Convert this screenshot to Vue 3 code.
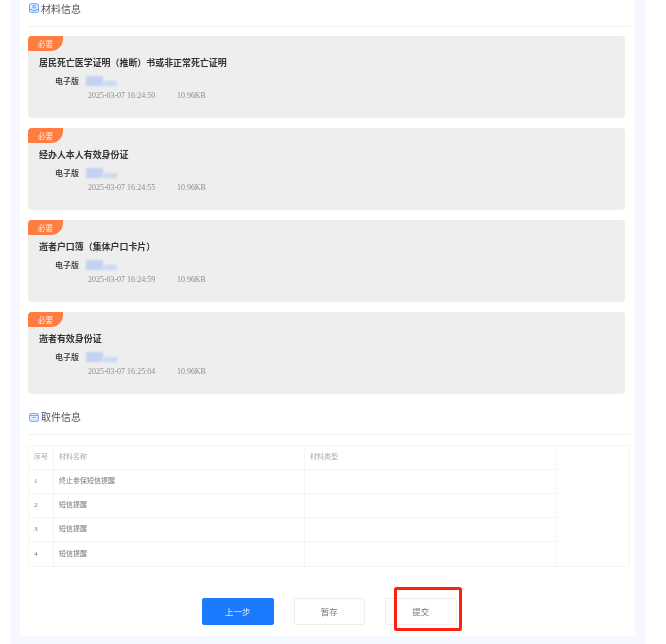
<script setup>
const materials = [
  { title: '居民死亡医学证明（推断）书或非正常死亡证明', time: '2025-03-07 16:24:50' },
  { title: '经办人本人有效身份证', time: '2025-03-07 16:24:55' },
  { title: '逝者户口簿（集体户口卡片）', time: '2025-03-07 16:24:59' },
  { title: '逝者有效身份证', time: '2025-03-07 16:25:04' }
]
const rows = ['终止参保短信提醒', '短信提醒', '短信提醒', '短信提醒']
</script>

<template>
  <div class="page">
    <main class="panel">
      <h2 class="heading first">
        <svg class="icon" viewBox="0 0 12 12" width="10" height="10">
          <rect x="0.6" y="0.8" width="10.8" height="10.4" rx="1.6" fill="#dcebff" stroke="#5b9dfa" stroke-width="1" />
          <circle cx="6" cy="4.4" r="1.7" fill="none" stroke="#4a90f5" stroke-width="1" />
          <path d="M1 8h2.6l1 1.2h2.8l1-1.2H11" fill="none" stroke="#4a90f5" stroke-width="1" />
        </svg>
        <span>材料信息</span>
      </h2>
      <section class="cards">
        <article v-for="m in materials" :key="m.time" class="card">
          <span class="tag">必要</span>
          <h3 class="card-title">{{ m.title }}</h3>
          <div class="file-row">
            <span class="file-label">电子版</span>
            <span class="file-name"><i class="b1"></i><i class="b2"></i></span>
          </div>
          <div class="meta">
            <span class="time">{{ m.time }}</span>
            <span>10.96KB</span>
          </div>
        </article>
      </section>

      <h2 class="heading second">
        <svg class="icon" viewBox="0 0 12 12" width="10" height="10">
          <rect x="0.7" y="1.8" width="10.6" height="9.4" rx="1.5" fill="#dcebff" stroke="#5b9dfa" stroke-width="1" />
          <path d="M1 4.2h10" stroke="#5b9dfa" stroke-width="1" />
          <path d="M4.4 6.6h3.2" stroke="#4a90f5" stroke-width="1" />
        </svg>
        <span>取件信息</span>
      </h2>
      <section class="table">
        <div class="row head">
          <div class="c no">序号</div>
          <div class="c name">材料名称</div>
          <div class="c type">材料类型</div>
        </div>
        <div v-for="(r, i) in rows" :key="i" class="row">
          <div class="c no">{{ i + 1 }}</div>
          <div class="c name">{{ r }}</div>
          <div class="c type"></div>
        </div>
      </section>

      <footer class="actions">
        <button class="btn primary">上一步</button>
        <button class="btn">暂存</button>
        <button class="btn submit">提交<span class="highlight"></span></button>
      </footer>
    </main>
  </div>
</template>

<style>
html, body { margin: 0; background: #fff; overflow: hidden; }
</style>

<style scoped>
.page {
  width: 635px;
  height: 644px;
  margin-left: 10px;
  padding: 0 10px 8px;
  box-sizing: border-box;
  background: #f5f9ff;
  font-family: "Liberation Serif", "Noto Sans CJK SC", serif;
  filter: blur(0.4px);
}
.panel {
  height: 636px;
  background: #fff;
  padding: 0 5px 0 8px;
  box-sizing: border-box;
  overflow: hidden;
}
.heading {
  display: flex;
  align-items: center;
  gap: 2px;
  margin: 0;
  padding-left: 1px;
  font-size: 10px;
  font-weight: 400;
  color: #555;
  font-family: "Noto Sans CJK SC", sans-serif;
  border-bottom: 1px solid #f0f0f0;
}
.first { height: 16px; padding-bottom: 10px; }
.second { height: 17px; margin-top: 14px; padding-bottom: 9px; }
.icon { flex: none; }
.cards {
  display: flex;
  flex-direction: column;
  gap: 10px;
  margin-top: 9px;
  margin-right: 5px;
}
.card {
  position: relative;
  height: 82px;
  background: #eeeeee;
  border-radius: 4px;
  padding: 20px 0 0 11px;
  box-sizing: border-box;
}
.tag {
  position: absolute;
  left: 0;
  top: 0;
  width: 35px;
  height: 15px;
  background: #ff7d41;
  border-radius: 4px 0 12px 0;
  color: #ffe9dd;
  font: 7.5px/15px "Noto Sans CJK SC", sans-serif;
  padding-left: 10px;
  box-sizing: border-box;
}
.card-title {
  margin: 0;
  font: 700 8.95px/14px "Noto Sans CJK SC", sans-serif;
  color: #333;
}
.file-row {
  display: flex;
  align-items: center;
  margin: 4px 0 0 16px;
  height: 14px;
}
.file-label {
  font: 500 8px/14px "Noto Sans CJK SC", sans-serif;
  color: #333;
  width: 31px;
}
.file-name {
  display: flex;
  align-items: flex-end;
  height: 10px;
  filter: blur(1.2px);
}
.b1 { width: 17px; height: 10px; background: #c3d1f2; }
.b2 { width: 13px; height: 5px; background: #c9daf2; margin-left: 1px; }
.meta {
  margin: 1px 0 0 49px;
  display: flex;
  font-size: 7.95px;
  line-height: 14px;
  color: #8b8b8b;
}
.time { width: 89px; }
.table {
  margin-top: 10px;
  border: 1px solid #f5f5f5;
  height: 122px;
  box-sizing: border-box;
  font-size: 7px;
}
.row {
  display: flex;
  height: 24px;
  width: 528px;
  border-bottom: 1px solid #f3f3f3;
  box-sizing: border-box;
}
.row:last-child { border-bottom: 0; }
.c {
  display: flex;
  align-items: center;
  box-sizing: border-box;
  padding-left: 5px;
  border-right: 1px solid #f5f5f5;
  color: #777;
  line-height: 1;
}
.head .c { color: #aaa; }
.no { width: 25px; }
.name { width: 251px; }
.type { width: 252px; }
.actions {
  display: flex;
  gap: 20px;
  margin: 31px 0 0 174px;
}
.btn {
  position: relative;
  width: 71.5px;
  height: 27px;
  padding: 0 0 2px;
  background: #fff;
  border: 1px solid #eeeeee;
  border-radius: 2px;
  color: #777;
  font: 8.5px "Noto Sans CJK SC", sans-serif;
}
.primary {
  background: #1a7bff;
  border-color: #1a7bff;
  color: #dbe9ff;
}
.highlight {
  position: absolute;
  left: 8px;
  top: -12px;
  width: 68px;
  height: 44px;
  border: 3.5px solid #ff2014;
  border-radius: 2.5px;
  box-sizing: border-box;
}
</style>
